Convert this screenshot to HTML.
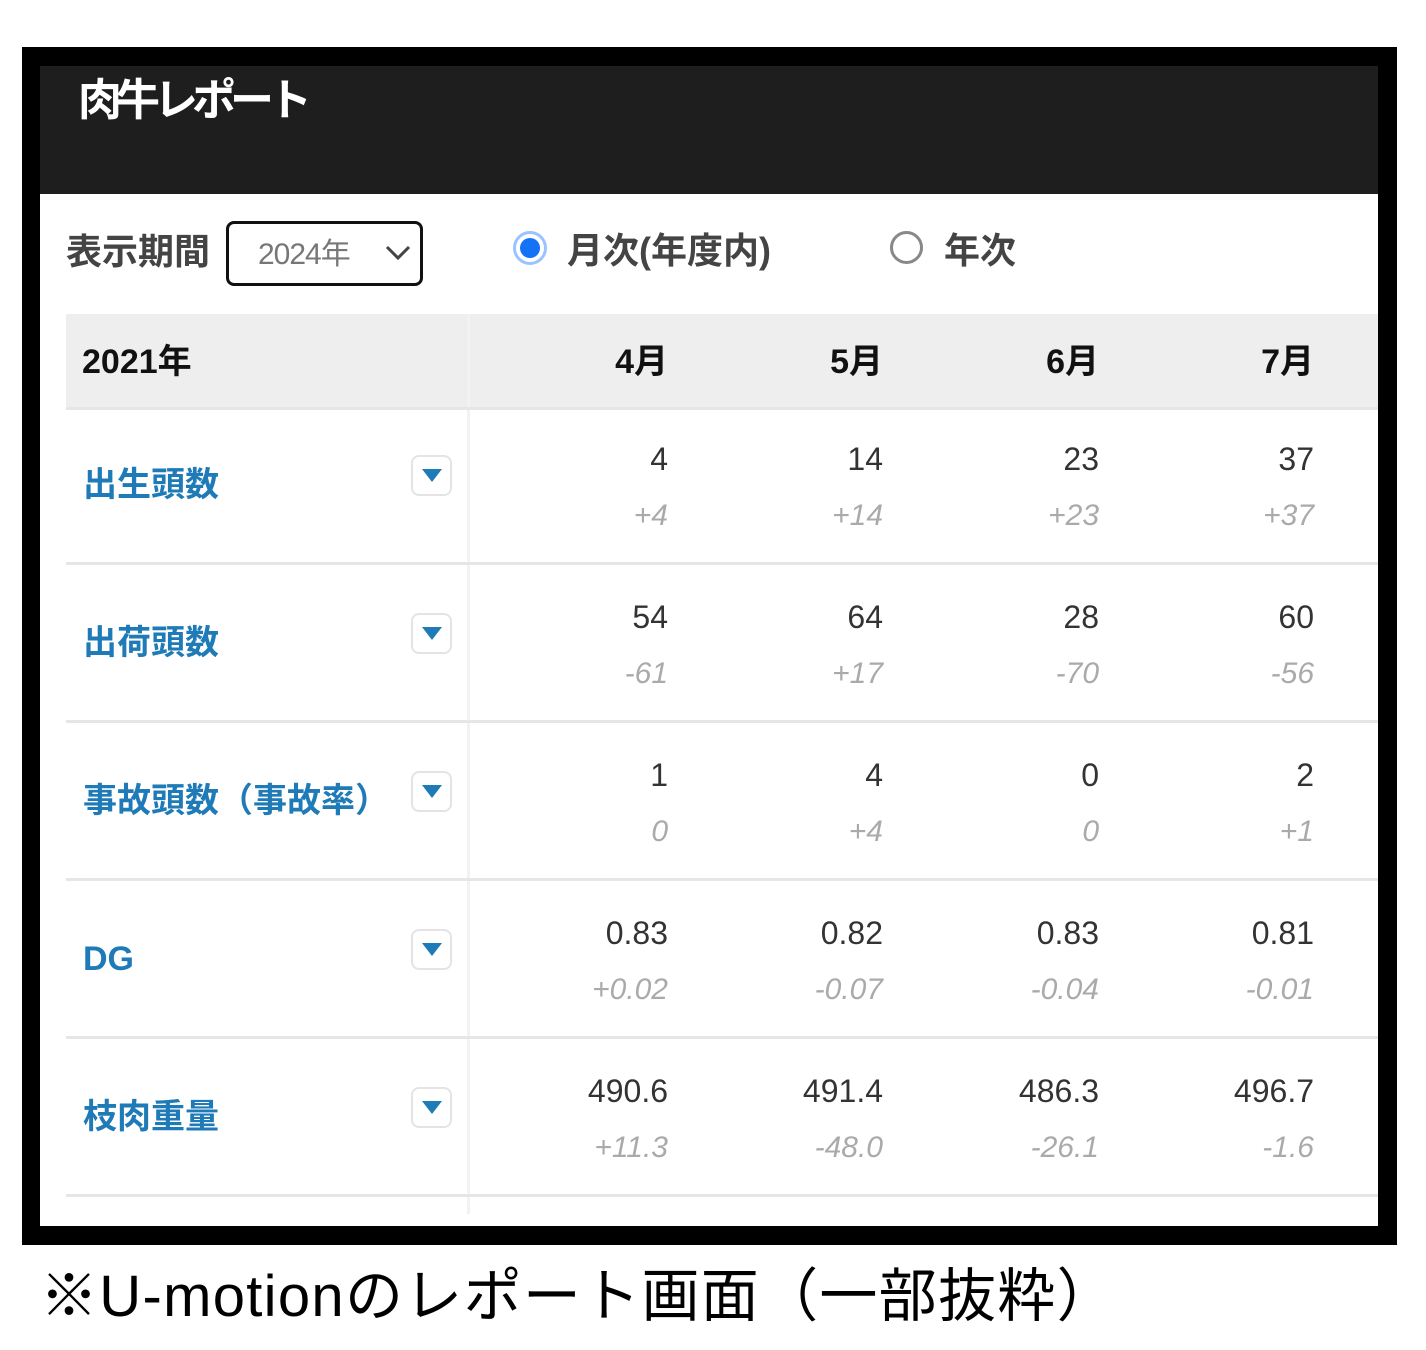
<!DOCTYPE html>
<html><head><meta charset="utf-8"><style>
*{margin:0;padding:0;box-sizing:border-box}
body{width:1426px;height:1350px;background:#fff;position:relative;overflow:hidden;font-family:"Liberation Sans","Noto Sans CJK JP",sans-serif}
.a{position:absolute;white-space:nowrap}
.frame{left:22px;top:47px;width:1375px;height:1198px;background:#000}
.head{left:40px;top:66px;width:1338px;height:128px;background:#1e1e1e}
.content{left:40px;top:194px;width:1338px;height:1032px;background:#fff}
.lbl{color:#1f7ab8;font-weight:bold;font-size:34px;left:83px;line-height:40px}
.v{font-size:32px;color:#333;width:200px;text-align:right;line-height:36px}
.d{font-size:30px;color:#aaa;font-style:italic;width:200px;text-align:right;line-height:36px}
.btn{left:411px;width:41px;height:41px;border:2px solid #e4e4e4;border-radius:8px;background:#fff}
.btn:after{content:"";position:absolute;left:9px;top:12px;border-left:10px solid transparent;border-right:10px solid transparent;border-top:13px solid #1f7ab8}
.hl{left:66px;width:1312px;height:3px;background:#e6e6e6}
.mh{font-size:34px;font-weight:bold;color:#111;width:200px;text-align:right;top:340px;line-height:44px}
</style></head><body>
<div class="a frame"></div>
<div class="a head"></div>
<div class="a content"></div>
<div class="a" style="left:78px;top:74px;color:#fff;font-size:44px;font-weight:bold;line-height:54px;letter-spacing:-6px">肉牛レポート</div>

<div class="a" style="left:66px;top:230px;font-size:36px;font-weight:bold;color:#444;line-height:44px">表示期間</div>
<div class="a" style="left:226px;top:221px;width:197px;height:65px;border:3px solid #111;border-radius:8px"></div>
<div class="a" style="left:258px;top:236px;font-size:30px;color:#777;line-height:38px;letter-spacing:-1px">2024年</div>
<svg class="a" style="left:384px;top:242px" width="28" height="22"><path d="M3 5 L14 16 L25 5" stroke="#444" stroke-width="3" fill="none"/></svg>
<div class="a" style="left:513px;top:231px;width:34px;height:34px;border-radius:50%;border:3px solid #9ac4ff;background:#fff"></div>
<div class="a" style="left:520px;top:238px;width:20px;height:20px;border-radius:50%;background:#1473f5"></div>
<div class="a" style="left:567px;top:228px;font-size:36px;font-weight:bold;color:#444;line-height:46px">月次(年度内)</div>
<div class="a" style="left:890px;top:231px;width:33px;height:33px;border-radius:50%;border:3px solid #888"></div>
<div class="a" style="left:944px;top:228px;font-size:36px;font-weight:bold;color:#444;line-height:46px">年次</div>

<div class="a" style="left:66px;top:314px;width:1312px;height:94px;background:#eeeeee"></div>
<div class="a" style="left:467px;top:314px;width:3px;height:900px;background:#f2f2f2"></div>
<div class="a" style="left:82px;top:340px;font-size:34px;font-weight:bold;color:#111;line-height:44px">2021年</div>
<div class="a mh" style="left:468px">4月</div>
<div class="a mh" style="left:683px">5月</div>
<div class="a mh" style="left:899px">6月</div>
<div class="a mh" style="left:1114px">7月</div>
<div class="a hl" style="top:407px"></div>

<div class="a lbl" style="top:465px">出生頭数</div>
<div class="a btn" style="top:455px"></div>
<div class="a v" style="left:468px;top:441px">4</div><div class="a d" style="left:468px;top:498px">+4</div>
<div class="a v" style="left:683px;top:441px">14</div><div class="a d" style="left:683px;top:498px">+14</div>
<div class="a v" style="left:899px;top:441px">23</div><div class="a d" style="left:899px;top:498px">+23</div>
<div class="a v" style="left:1114px;top:441px">37</div><div class="a d" style="left:1114px;top:498px">+37</div>
<div class="a hl" style="top:562px"></div>

<div class="a lbl" style="top:623px">出荷頭数</div>
<div class="a btn" style="top:613px"></div>
<div class="a v" style="left:468px;top:599px">54</div><div class="a d" style="left:468px;top:656px">-61</div>
<div class="a v" style="left:683px;top:599px">64</div><div class="a d" style="left:683px;top:656px">+17</div>
<div class="a v" style="left:899px;top:599px">28</div><div class="a d" style="left:899px;top:656px">-70</div>
<div class="a v" style="left:1114px;top:599px">60</div><div class="a d" style="left:1114px;top:656px">-56</div>
<div class="a hl" style="top:720px"></div>

<div class="a lbl" style="top:781px">事故頭数（事故率）</div>
<div class="a btn" style="top:771px"></div>
<div class="a v" style="left:468px;top:757px">1</div><div class="a d" style="left:468px;top:814px">0</div>
<div class="a v" style="left:683px;top:757px">4</div><div class="a d" style="left:683px;top:814px">+4</div>
<div class="a v" style="left:899px;top:757px">0</div><div class="a d" style="left:899px;top:814px">0</div>
<div class="a v" style="left:1114px;top:757px">2</div><div class="a d" style="left:1114px;top:814px">+1</div>
<div class="a hl" style="top:878px"></div>

<div class="a lbl" style="top:939px">DG</div>
<div class="a btn" style="top:929px"></div>
<div class="a v" style="left:468px;top:915px">0.83</div><div class="a d" style="left:468px;top:972px">+0.02</div>
<div class="a v" style="left:683px;top:915px">0.82</div><div class="a d" style="left:683px;top:972px">-0.07</div>
<div class="a v" style="left:899px;top:915px">0.83</div><div class="a d" style="left:899px;top:972px">-0.04</div>
<div class="a v" style="left:1114px;top:915px">0.81</div><div class="a d" style="left:1114px;top:972px">-0.01</div>
<div class="a hl" style="top:1036px"></div>

<div class="a lbl" style="top:1097px">枝肉重量</div>
<div class="a btn" style="top:1087px"></div>
<div class="a v" style="left:468px;top:1073px">490.6</div><div class="a d" style="left:468px;top:1130px">+11.3</div>
<div class="a v" style="left:683px;top:1073px">491.4</div><div class="a d" style="left:683px;top:1130px">-48.0</div>
<div class="a v" style="left:899px;top:1073px">486.3</div><div class="a d" style="left:899px;top:1130px">-26.1</div>
<div class="a v" style="left:1114px;top:1073px">496.7</div><div class="a d" style="left:1114px;top:1130px">-1.6</div>
<div class="a hl" style="top:1194px"></div>

<div class="a" style="left:40px;top:1262px;font-size:58px;color:#000;line-height:70px;letter-spacing:1.3px">※U-motionのレポート画面（一部抜粋）</div>
</body></html>
